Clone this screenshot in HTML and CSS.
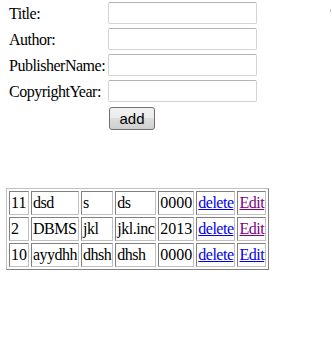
FILE: index.html
```html
<!DOCTYPE html>
<html lang="en">
<head>
  <meta charset="UTF-8">
  <title>Books</title>
  <link rel="stylesheet" href="styles.css">
</head>
<body>
  <div class="page">
    <form class="book-form" onsubmit="return false">
      <label for="title">Title:</label>
      <input type="text" id="title">
      <label for="author">Author:</label>
      <input type="text" id="author">
      <label for="publisher">PublisherName:</label>
      <input type="text" id="publisher">
      <label for="year">CopyrightYear:</label>
      <input type="text" id="year">
      <span></span>
      <div><button type="submit">add</button></div>
    </form>

    <table class="books">
      <tr>
        <td class="num">11</td><td>dsd</td><td>s</td><td>ds</td><td class="num">0000</td>
        <td><a href="#" class="link">delete</a></td>
        <td><a href="#" class="link visited">Edit</a></td>
      </tr>
      <tr>
        <td class="num">2</td><td>DBMS</td><td>jkl</td><td>jkl.inc</td><td class="num">2013</td>
        <td><a href="#" class="link">delete</a></td>
        <td><a href="#" class="link visited">Edit</a></td>
      </tr>
      <tr>
        <td class="num">10</td><td>ayydhh</td><td>dhsh</td><td>dhsh</td><td class="num">0000</td>
        <td><a href="#" class="link">delete</a></td>
        <td><a href="#" class="link">Edit</a></td>
      </tr>
    </table>
  </div>
  <span class="corner-mark"></span>
</body>
</html>
```

FILE: styles.css
```css
body {
  margin: 0;
  font-family: "Liberation Serif", "Times New Roman", serif;
  font-size: 16px;
  letter-spacing: -0.5px;
  color: #000;
  background-color: #fff;
}
.page {
  padding: 2px 0 0 6px;
}
.book-form {
  display: grid;
  grid-template-columns: 99px 149px;
  row-gap: 4px;
  padding-left: 3px;
  align-items: center;
}
.book-form label {
  line-height: 20px;
  padding-top: 2px;
  white-space: nowrap;
}
.book-form input {
  box-sizing: border-box;
  width: 149px;
  height: 22px;
  margin: 0;
  padding: 1px 3px;
  border: 1px solid #d4d4d4;
  border-top-color: #b4b4b4;
  border-radius: 2px;
  font-family: "Liberation Sans", Arial, sans-serif;
  font-size: 13px;
}
.book-form button {
  box-sizing: border-box;
  width: 46px;
  height: 23px;
  margin: 1px 0 0 1px;
  padding: 0;
  border: 1px solid #707070;
  border-radius: 3px;
  background: linear-gradient(#f2f2f2, #ebebeb 50%, #dddddd 50%, #cfcfcf);
  font-family: "Liberation Sans", Arial, sans-serif;
  font-size: 15px;
  letter-spacing: 0;
  color: #000;
  cursor: pointer;
}
.books {
  margin-top: 58px;
  border: 1px solid;
  border-color: #c0c0c0 #808080 #808080 #c0c0c0;
  border-spacing: 2px;
}
.books td {
  padding: 1px;
  line-height: 20px;
  border: 1px solid;
  border-color: #808080 #c0c0c0 #c0c0c0 #808080;
  white-space: nowrap;
}
.books td.num {
  letter-spacing: 0;
}
.link {
  color: #0000ee;
}
.link.visited {
  color: #800080;
}
.corner-mark {
  position: absolute;
  top: 9px;
  left: 330px;
  width: 1px;
  height: 3px;
  background-color: #b8c4d8;
}
```
